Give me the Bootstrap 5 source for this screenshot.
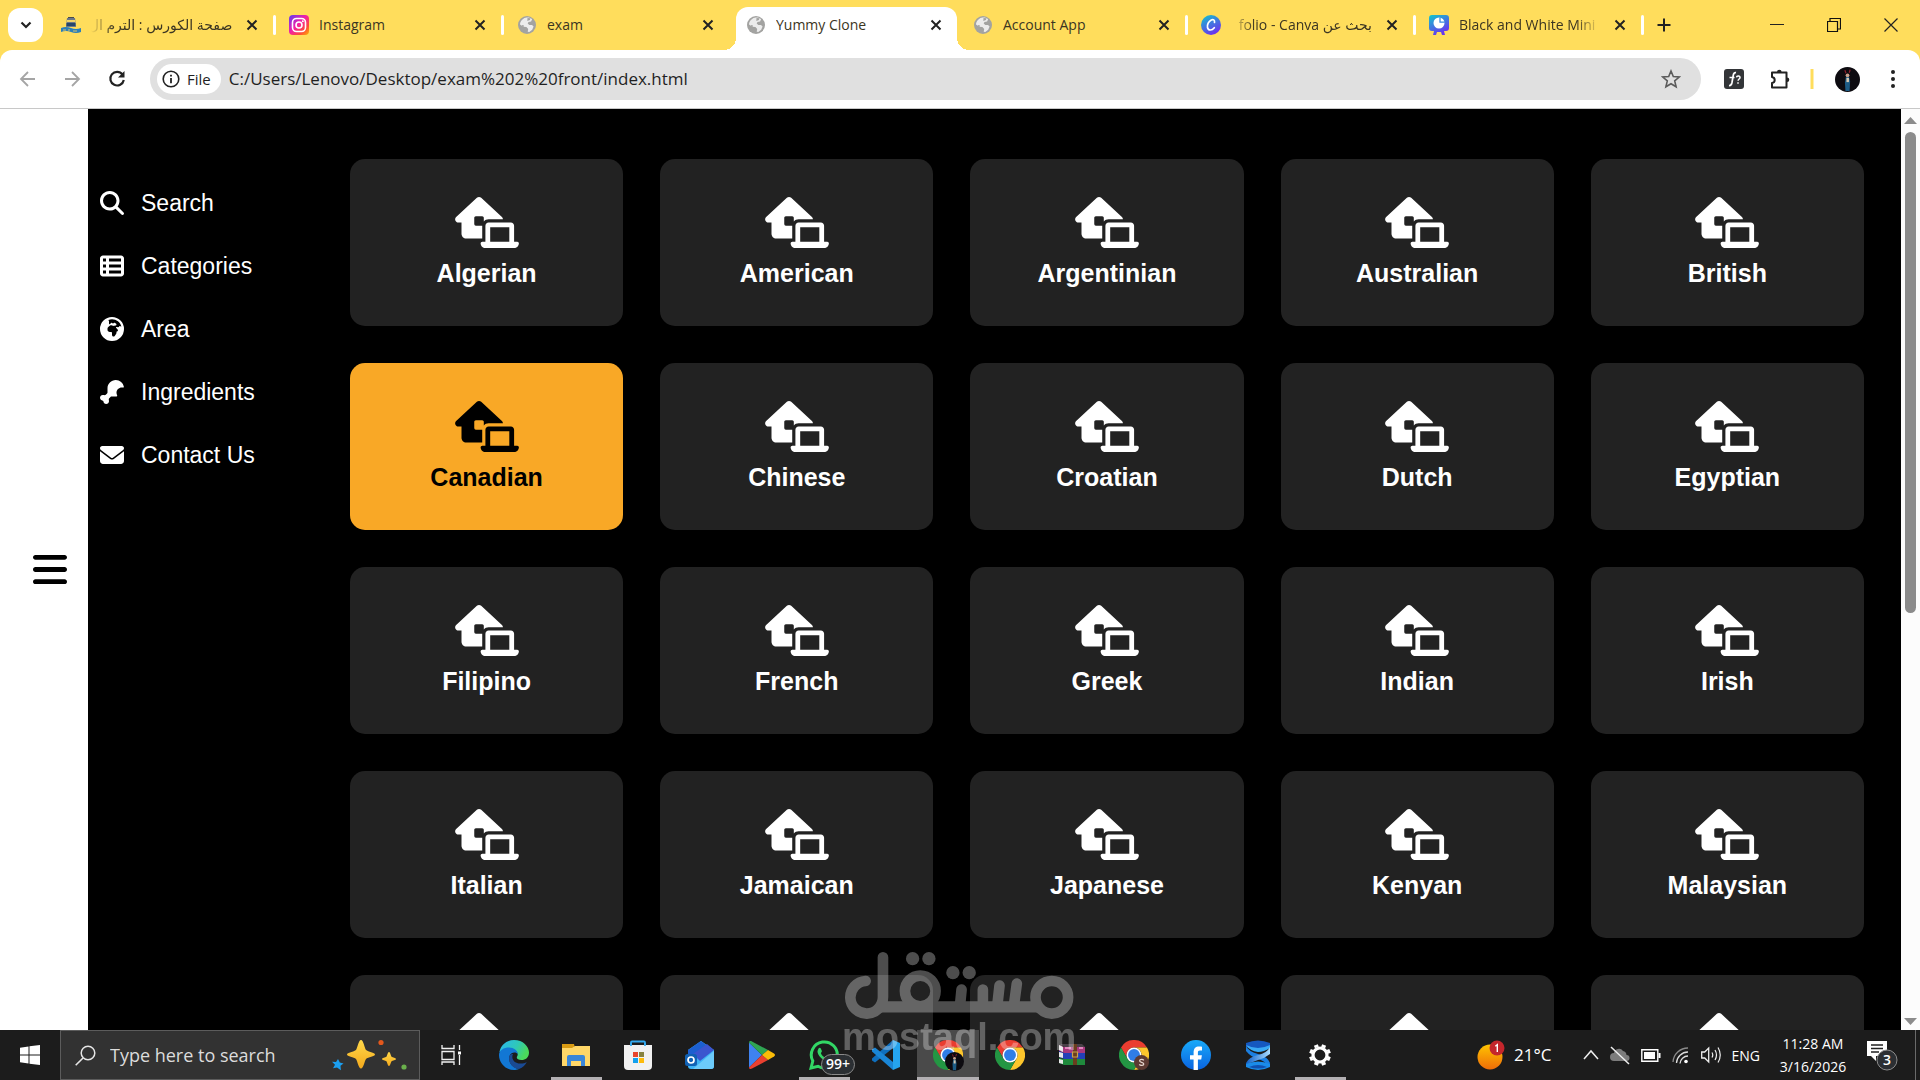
<!DOCTYPE html>
<html lang="en">
<head>
<meta charset="utf-8">
<meta name="viewport" content="width=device-width, initial-scale=1">
<title>Yummy Clone</title>
<link rel="stylesheet" href="https://cdn.jsdelivr.net/npm/bootstrap@5.3.0/dist/css/bootstrap.min.css">
<style>
  body { font-family: "Open Sans", "Noto Sans", "DejaVu Sans", sans-serif; font-size: 14px; color: #1f1f1f; }
  button { font-family: inherit; }
  svg { display: block; flex: none; }
  .bare { background: none; border: 0; padding: 0; color: inherit; }

  /* tab strip */
  .chrome-frame { background: #ffdd5c; }
  .tab-strip { height: 50px; padding-left: 8px; }
  .tab-finder { width: 35px; height: 34px; border-radius: 12px; background: #fff; margin: 8px 5px 8px 0; }
  .tab-item { flex: 0 1 228px; min-width: 0; padding: 0 0 7px 13px; height: 43px; align-self: flex-end; }
  .tab-item a { color: #3b3522; text-decoration: none; gap: 10px; min-width: 0; }
  .tab-title { white-space: nowrap; overflow: hidden; line-height: 20px; }
  .tab-close { width: 20px; margin: 0 11px 0 10px; }
  .tab-sep { width: 3px; height: 20px; border-radius: 2px; }
  .tab-item.divided .tab-sep { background: #fff; }
  .fade-end { -webkit-mask-image: linear-gradient(to left, transparent, #000 24px); mask-image: linear-gradient(to left, transparent, #000 24px); }
  .fade-start { -webkit-mask-image: linear-gradient(to right, transparent, #000 24px); mask-image: linear-gradient(to right, transparent, #000 24px); }
  .tab-item.current { flex-basis: 221px; margin: 0 3px 0 4px; background: #fff; border-radius: 12px 12px 0 0; padding-left: 10px; position: relative; }
  .tab-item.current .tab-close { margin-right: 8px; }
  .tab-item.current::before, .tab-item.current::after { content: ""; position: absolute; bottom: 0; width: 12px; height: 12px; }
  .tab-item.current::before { left: -12px; background: radial-gradient(circle at 0 0, transparent 12px, #fff 12px); }
  .tab-item.current::after { right: -12px; background: radial-gradient(circle at 100% 0, transparent 12px, #fff 12px); }
  .new-tab { padding: 0 13px; }
  .window-keys { gap: 43px; padding-right: 22px; }

  /* toolbar */
  .tool-row { background: #fff; border-radius: 12px 12px 0 0; padding: 8px 18px; border-bottom: 1px solid #c8c8c8; height: 59px; }
  .nav-keys { gap: 24px; padding-right: 22px; }
  .omnibox { background: #e0e0e0; border-radius: 21px; height: 42px; padding: 6px 20px 6px 7px; }
  .file-chip { background: #fff; border-radius: 15px; height: 30px; padding: 0 10px 0 5px; gap: 7px; font-size: 15px; }
  .omnibox input { background: none; border: 0; outline: 0; font-size: 17px; color: #1f1f1f; padding: 0 0 0 8px; min-width: 0; }
  .side-tools { padding-left: 23px; }

  /* page */
  .hamburger-rail { width: 88px; background: #fff; color: #000; padding-left: 33px; }
  .page-black { background: #000; font-family: "Liberation Sans", Arial, sans-serif; }
  .side-menu { width: 262px; padding: 76px 0 0 12px; gap: 27px; }
  .side-menu a { color: #fff; text-decoration: none; font-size: 23px; line-height: 36px; gap: 17px; }
  .area-grid { padding: 50px 37px 0 0; min-width: 0; }
  .area-row { --bs-gutter-x: 37px; --bs-gutter-y: 37px; }
  .area-tile { background: #222; color: #fff; border-radius: 15px; padding: 38px 12px 37px; min-height: 167px; cursor: pointer; }
  .area-tile svg { margin: 0 auto 10px; }
  .area-tile h3 { font-size: 25px; line-height: 30px; font-weight: 700; margin: 0; text-align: center; }
  .area-tile.picked { background: #f9a826; color: #000; }
  .scroll-rail { width: 19px; background: #fcfcfc; padding: 8px 0 5px; }
  .scroll-thumb { width: 11px; flex: 0 0 53%; margin: 8px 0 auto; border-radius: 6px; background: #8b8b8b; }

  /* taskbar */
  .task-bar { height: 50px; background: #1c1c1c; color: #fff; }
  .start-key { width: 60px; }
  .search-field { width: 360px; background: #323232; border: 1px solid #5c5c5c; padding: 0 8px 0 14px; }
  .search-field input { background: none; border: 0; outline: 0; color: #dcdcdc; font-size: 18px; padding: 0 0 0 14px; width: 0; }
  .search-field input::placeholder { color: #dcdcdc; opacity: 1; }
  .task-key { width: 62px; height: 50px; }
  .task-key.open { background: linear-gradient(#b3b0b3, #b3b0b3) center bottom / 51px 3px no-repeat; }
  .task-key.focused { background: linear-gradient(#b3b0b3, #b3b0b3) center bottom / 62px 3px no-repeat #4a4a4a; }
  .view-key { width: 63px; }
  .count-pill { left: 28px; top: 24px; height: 21px; line-height: 18px; padding: 0 4px; font-size: 14px; font-weight: 600; border: 1px solid #8a8a8a; border-radius: 11px; background: #2b2f33; }
  .tray { gap: 11px; }
  .weather { gap: 9px; font-size: 17px; margin-right: 20px; }
  .clock { width: 84px; line-height: 23px; text-align: center; }
  .notice { margin-right: 6px; }
  .peek { width: 5px; border-left: 1px solid #6a6a6a; }
  .water-sign { left: 50%; bottom: 17px; transform: translateX(-50%); opacity: .3; pointer-events: none; }
</style>
</head>
<body class="vh-100 d-flex flex-column overflow-hidden position-relative">

<svg width="0" height="0" class="position-absolute" aria-hidden="true">
  <defs>
    <linearGradient id="g-insta" x1="0" y1="0" x2="1" y2="1"><stop offset="0" stop-color="#5b3df5"/><stop offset=".45" stop-color="#f21fa8"/><stop offset=".75" stop-color="#ff4b3a"/><stop offset="1" stop-color="#ffb400"/></linearGradient>
    <linearGradient id="g-canva" x1="0" y1="0" x2=".5" y2="1"><stop offset="0" stop-color="#10c8cc"/><stop offset="1" stop-color="#6a35ee"/></linearGradient>
    <linearGradient id="g-edge" x1="0" y1="0" x2="1" y2=".4"><stop offset="0" stop-color="#29b6f0"/><stop offset=".6" stop-color="#2fc8b8"/><stop offset="1" stop-color="#4bd95a"/></linearGradient>
    <linearGradient id="g-gold" x1="0" y1="0" x2="0" y2="1"><stop offset="0" stop-color="#ffd84a"/><stop offset="1" stop-color="#f4a91c"/></linearGradient>
    <linearGradient id="g-sun" x1="0" y1="0" x2="0" y2="1"><stop offset="0" stop-color="#ffc400"/><stop offset="1" stop-color="#ee6c08"/></linearGradient>
    <linearGradient id="g-fb" x1="0" y1="0" x2="0" y2="1"><stop offset="0" stop-color="#19aaf9"/><stop offset="1" stop-color="#0a63e0"/></linearGradient>
    <linearGradient id="g-ribbon" x1="0" y1="0" x2="1" y2="0"><stop offset="0" stop-color="#1260c8"/><stop offset="1" stop-color="#a8dcff"/></linearGradient>
  </defs>
  <symbol id="i-house" viewBox="0 0 640 512"><path fill="currentColor" d="M218.3 8.5c12.3-11.3 31.2-11.3 43.4 0l208 192c6.7 6.2 10.3 14.8 10.3 23.5H336c-19.1 0-36.3 8.4-48 21.7V208c0-8.8-7.2-16-16-16H208c-8.8 0-16 7.2-16 16v64c0 8.800 7.200 16 16 16h64V416H112c-26.500 0-48-21.500-48-48V256H32c-13.200 0-25-8.100-29.800-20.300s-1.600-26.200 8.100-35.200l208-192zM352 304V448H544V304H352zm-48-16c0-17.700 14.300-32 32-32H560c17.700 0 32 14.300 32 32V448h32c8.800 0 16 7.200 16 16c0 26.500-21.500 48-48 48H544 352 304c-26.500 0-48-21.500-48-48c0-8.800 7.200-16 16-16h32V288z"/></symbol>
  <symbol id="i-close" viewBox="0 0 12 12"><path d="M1.500 1.500l9 9m0-9l-9 9" stroke="#222" stroke-width="2" fill="none"/></symbol>
  <symbol id="i-globe" viewBox="0 0 20 20"><circle cx="10" cy="10" r="9" fill="#a3a3a1"/><path d="M8.500 2.800c2.200-.8 5-.2 6.600 1.400l-1 2.300-2.600.4-.8 1.700 1.600 1.500 2.700-.2 1.600 1.500-1.400 3.400-2.900 2.300-1.600-.3.500-2.700-1.800-2-3-.3L3 9.500c.1-3 2.600-6 5.500-6.700z" fill="#ececec"/><path d="M10.500 3l3 .3-.6 1.700-2.600.9zM5 10l2 .5-.5 1.400-1.300-.4z" fill="#a3a3a1"/></symbol>
  <symbol id="i-chrome" viewBox="0 0 48 48"><path fill="#ea3d30" d="M3.200 12A24 24 0 0 1 44.800 12H24A12 12 0 0 0 13.600 30Z"/><path fill="#fdc62c" d="M44.800 12A24 24 0 0 1 24 48L34.400 30A12 12 0 0 0 24 12Z"/><path fill="#239643" d="M3.200 12A24 24 0 0 0 24 48L34.400 30A12 12 0 0 1 13.600 30Z"/><circle cx="24" cy="24" r="12" fill="#fff"/><circle cx="24" cy="24" r="9.500" fill="#2f7de8"/></symbol>
  <symbol id="i-face" viewBox="0 0 24 24"><circle cx="12" cy="12" r="12" fill="#0d0b10"/><path d="M10.500 9h3l1 5-.5 9h-4l-.5-8z" fill="#1d5c86"/><circle cx="12" cy="8" r="1.800" fill="#c9a08a"/><path d="M11 10.500h2.400v4H11z" fill="#d8c8b0"/><path d="M9.500 3l1 3m4-3.500l-.8 3" stroke="#8d1f2b" stroke-width="1.200"/></symbol>
</svg>

<header class="chrome-frame">
  <div class="tab-strip d-flex">
    <button class="tab-finder bare bg-white d-flex align-items-center justify-content-center" aria-label="Search tabs">
      <svg width="12" height="8" viewBox="0 0 12 8"><path d="M1.500 1.500L6 6l4.500-4.500" fill="none" stroke="#222" stroke-width="2.200"/></svg>
    </button>

    <div class="tab-item divided d-flex align-items-center">
      <a href="#" class="d-flex align-items-center flex-fill">
        <svg width="20" height="20" viewBox="0 0 20 20"><path d="M6 3h8l1 9H5z" fill="#6b7788"/><path d="M6 5h8v2H6z" fill="#f1d56a"/><path d="M5.500 8h9v3h-9z" fill="#26466b"/><path d="M7 2h6v1H7z" fill="#4a4a4a"/><path d="M0 13q5-2 10 0t10 0v4q-5 2-10 0t-10 0z" fill="#2d7fb8"/><path d="M2 15h3m2 0h2m3 1h4" stroke="#d7c46a" stroke-width="1"/></svg>
        <span class="tab-title flex-fill fade-start" dir="rtl">صفحة الكورس : الترم ال</span>
      </a>
      <button class="tab-close bare d-flex justify-content-center" aria-label="Close tab"><svg width="12" height="12"><use href="#i-close"/></svg></button>
      <span class="tab-sep"></span>
    </div>
    <div class="tab-item divided d-flex align-items-center">
      <a href="#" class="d-flex align-items-center flex-fill">
        <svg width="20" height="20" viewBox="0 0 20 20"><rect width="20" height="20" rx="4" fill="url(#g-insta)"/><rect x="3.500" y="3.500" width="13" height="13" rx="4" fill="none" stroke="#fff" stroke-width="1.600"/><circle cx="10" cy="10" r="3" fill="none" stroke="#fff" stroke-width="1.600"/><circle cx="13.800" cy="6.300" r="1" fill="#fff"/></svg>
        <span class="tab-title flex-fill">Instagram</span>
      </a>
      <button class="tab-close bare d-flex justify-content-center" aria-label="Close tab"><svg width="12" height="12"><use href="#i-close"/></svg></button>
      <span class="tab-sep"></span>
    </div>
    <div class="tab-item d-flex align-items-center">
      <a href="#" class="d-flex align-items-center flex-fill">
        <svg width="20" height="20"><use href="#i-globe"/></svg>
        <span class="tab-title flex-fill">exam</span>
      </a>
      <button class="tab-close bare d-flex justify-content-center" aria-label="Close tab"><svg width="12" height="12"><use href="#i-close"/></svg></button>
      <span class="tab-sep"></span>
    </div>
    <div class="tab-item current d-flex align-items-center">
      <a href="#" class="d-flex align-items-center flex-fill">
        <svg width="20" height="20"><use href="#i-globe"/></svg>
        <span class="tab-title flex-fill">Yummy Clone</span>
      </a>
      <button class="tab-close bare d-flex justify-content-center" aria-label="Close tab"><svg width="12" height="12"><use href="#i-close"/></svg></button>
      <span class="tab-sep"></span>
    </div>
    <div class="tab-item divided d-flex align-items-center">
      <a href="#" class="d-flex align-items-center flex-fill">
        <svg width="20" height="20"><use href="#i-globe"/></svg>
        <span class="tab-title flex-fill">Account App</span>
      </a>
      <button class="tab-close bare d-flex justify-content-center" aria-label="Close tab"><svg width="12" height="12"><use href="#i-close"/></svg></button>
      <span class="tab-sep"></span>
    </div>
    <div class="tab-item divided d-flex align-items-center">
      <a href="#" class="d-flex align-items-center flex-fill">
        <svg width="20" height="20" viewBox="0 0 20 20"><circle cx="10" cy="10" r="10" fill="url(#g-canva)"/><path d="M13.500 7.500c.5-2.500-1.400-3.500-3.200-2.600C7.500 6.300 6 9.800 6.500 12.500c.6 3.200 4.300 3.400 6.800.2" fill="none" stroke="#fff" stroke-width="1.700" stroke-linecap="round"/></svg>
        <span class="tab-title flex-fill fade-start" dir="rtl">بحث عن folio - Canva</span>
      </a>
      <button class="tab-close bare d-flex justify-content-center" aria-label="Close tab"><svg width="12" height="12"><use href="#i-close"/></svg></button>
      <span class="tab-sep"></span>
    </div>
    <div class="tab-item divided d-flex align-items-center">
      <a href="#" class="d-flex align-items-center flex-fill">
        <svg width="20" height="20" viewBox="0 0 20 20"><path d="M3 0h14a3 3 0 0 1 3 3v10a3 3 0 0 1-3 3h-2l1 4h-3l-1-3h-4l-1 3H4l1-4H3a3 3 0 0 1-3-3V3a3 3 0 0 1 3-3z" fill="url(#g-canva)"/><circle cx="10" cy="8" r="5.500" fill="#fff"/><path d="M11 2.500v4.700h4.800" fill="none" stroke="#3a8be0" stroke-width="1.300"/></svg>
        <span class="tab-title flex-fill fade-end">Black and White Mini</span>
      </a>
      <button class="tab-close bare d-flex justify-content-center" aria-label="Close tab"><svg width="12" height="12"><use href="#i-close"/></svg></button>
      <span class="tab-sep"></span>
    </div>
    <button class="new-tab bare" aria-label="New tab"><svg width="14" height="14" viewBox="0 0 14 14"><path d="M7 .5v13M.5 7h13" stroke="#222" stroke-width="2"/></svg></button>
    <div class="window-keys d-flex align-items-center ms-auto">
      <button class="bare" aria-label="Minimize"><svg width="14" height="14"><path d="M0 6.500h14" stroke="#222"/></svg></button>
      <button class="bare" aria-label="Restore"><svg width="14" height="14" viewBox="0 0 14 14"><path d="M.5 3.500h10v10H.5zM3 3V.5h10.500V11H11" fill="none" stroke="#111" stroke-width="1.200"/></svg></button>
      <button class="bare" aria-label="Close window"><svg width="14" height="14" viewBox="0 0 14 14"><path d="M.5.5l13 13m0-13l-13 13" stroke="#222" stroke-width="1.200"/></svg></button>
    </div>
  </div>

  <div class="tool-row d-flex align-items-center">
    <div class="nav-keys d-flex">
      <button class="bare" aria-label="Back"><svg width="20" height="20" viewBox="0 0 20 20"><path d="M17 10H3.500M10 3l-7 7 7 7" fill="none" stroke="#a5a5a5" stroke-width="1.800"/></svg></button>
      <button class="bare" aria-label="Forward"><svg width="20" height="20" viewBox="0 0 20 20"><path d="M3 10h13.500M10 3l7 7-7 7" fill="none" stroke="#a5a5a5" stroke-width="1.800"/></svg></button>
      <button class="bare" aria-label="Reload"><svg width="22" height="20" viewBox="0 0 22 20"><path d="M16.500 5.500A6.800 6.800 0 1 0 17.800 11" fill="none" stroke="#222" stroke-width="2.200"/><path d="M18.500 2v6.500H12z" fill="#222"/></svg></button>
    </div>
    <div class="omnibox d-flex align-items-center flex-fill">
      <button class="file-chip bare bg-white d-flex align-items-center"><svg width="18" height="18" viewBox="0 0 18 18"><circle cx="9" cy="9" r="7.800" fill="none" stroke="#222" stroke-width="1.600"/><path d="M9 8v5.200M9 4.800v1.800" stroke="#222" stroke-width="1.800"/></svg>File</button>
      <input class="flex-fill" type="text" aria-label="Address" value="C:/Users/Lenovo/Desktop/exam%202%20front/index.html">
      <button class="bare" aria-label="Bookmark this page"><svg width="20" height="20" viewBox="0 0 20 20"><path d="M10 2l2.300 5.500 6 .5-4.600 3.900 1.400 5.900L10 14.700l-5.100 3.100 1.400-5.900L1.700 8l6-.5z" fill="none" stroke="#5b5b5b" stroke-width="1.600"/></svg></button>
    </div>
    <div class="side-tools d-flex align-items-center">
      <button class="bare" aria-label="Font finder"><svg width="20" height="20" viewBox="0 0 20 20"><rect width="20" height="20" rx="3" fill="#333538"/><path d="M5 16.500c2 .3 2.600-1 3-3L9.300 6c.3-1.700 1-2.600 2.700-2.300M5.500 8.500h5" fill="none" stroke="#fff" stroke-width="1.700"/><path d="M12.500 8.300c.3-1.800 4-1.600 3.500.6-.3 1.200-1.800 1.200-1.900 2.900m-.1 1.400v1.600" fill="none" stroke="#fff" stroke-width="1.500"/></svg></button>
      <button class="bare ms-4" aria-label="Extensions"><svg width="24" height="24" viewBox="0 0 24 24"><path d="M4 5.500h14.500v15H4V16c3.600-.5 3.600-5.500 0-6z" fill="none" stroke="#222" stroke-width="2" stroke-linejoin="round"/><path d="M9 5a2.300 2.300 0 0 1 4.600 0zM19 10.500a2.300 2.300 0 0 1 0 4.600z" fill="#222"/></svg></button>
      <svg class="mx-3" width="7" height="20"><path d="M4 0v20" stroke="#ffdd5c" stroke-width="3"/></svg>
      <button class="bare ms-1" aria-label="Profile"><svg width="25" height="25"><use href="#i-face"/></svg></button>
      <button class="bare ms-4" aria-label="Menu"><svg width="18" height="20" viewBox="0 0 18 20"><g fill="#222"><circle cx="9" cy="3" r="2"/><circle cx="9" cy="10" r="2"/><circle cx="9" cy="17" r="2"/></g></svg></button>
    </div>
  </div>
</header>

<main class="d-flex flex-fill overflow-hidden">
  <div class="hamburger-rail d-flex align-items-center flex-shrink-0">
    <button class="bare" aria-label="Toggle menu"><svg width="34" height="39" viewBox="0 0 448 512"><path fill="#000" d="M0 96C0 78.300 14.300 64 32 64H416c17.700 0 32 14.300 32 32s-14.300 32-32 32H32C14.300 128 0 113.700 0 96zM0 256c0-17.700 14.300-32 32-32H416c17.700 0 32 14.300 32 32s-14.300 32-32 32H32c-17.700 0-32-14.300-32-32zM448 416c0 17.700-14.300 32-32 32H32c-17.700 0-32-14.300-32-32s14.300-32 32-32H416c17.700 0 32 14.300 32 32z"/></svg></button>
  </div>
  <div class="page-black d-flex flex-fill overflow-hidden">
    <nav class="side-menu d-flex flex-column flex-shrink-0">
      <a href="#" class="d-flex align-items-center"><svg width="24" height="24" viewBox="0 0 512 512"><path fill="#fff" d="M416 208c0 45.900-14.900 88.300-40 122.700L502.600 457.400c12.500 12.500 12.500 32.800 0 45.300s-32.800 12.500-45.300 0L330.700 376c-34.400 25.200-76.800 40-122.700 40C93.100 416 0 322.900 0 208S93.100 0 208 0S416 93.100 416 208zM208 352a144 144 0 1 0 0-288 144 144 0 1 0 0 288z"/></svg>Search</a>
      <a href="#" class="d-flex align-items-center"><svg width="24" height="24" viewBox="0 0 512 512"><path fill="#fff" d="M0 96C0 60.700 28.700 32 64 32H448c35.300 0 64 28.700 64 64V416c0 35.300-28.700 64-64 64H64c-35.300 0-64-28.700-64-64V96zm64 0v64h64V96H64zm384 0H192v64H448V96zM64 224v64h64V224H64zm384 0H192v64H448V224zM64 352v64h64V352H64zm384 0H192v64H448V352z"/></svg>Categories</a>
      <a href="#" class="d-flex align-items-center"><svg width="24" height="24" viewBox="0 0 512 512"><path fill="#fff" d="M177.800 63.200l10 17.400c2.800 4.800 4.200 10.300 4.200 15.900v41.400c0 3.900 1.600 7.700 4.300 10.400c6.200 6.200 16.500 5.700 22-1.200l13.600-17c4.700-5.900 12.900-7.700 19.600-4.300l15.200 7.600c3.400 1.700 7.200 2.600 11 2.600c6.500 0 12.800-2.600 17.400-7.200l3.900-3.900c2.900-2.900 7.300-3.600 11-1.800l29.200 14.600c7.800 3.900 12.600 11.800 12.600 20.500c0 10.500-7.100 19.600-17.300 22.200l-35.400 8.800c-7.400 1.800-15.100 1.500-22.400-.9l-32-10.700c-3.300-1.100-6.700-1.700-10.200-1.700c-7 0-13.800 2.300-19.400 6.500L176 212c-10.100 7.600-16 19.400-16 32v28c0 26.500 21.500 48 48 48h32c8.800 0 16 7.200 16 16v48c0 17.700 14.300 32 32 32c10.100 0 19.600-4.700 25.600-12.800l25.600-34.100c8.300-11.100 12.800-24.600 12.800-38.400V318.600c0-3.900 2.600-7.300 6.400-8.200l5.300-1.300c11.900-3 20.300-13.700 20.300-26c0-7.100-2.800-13.900-7.800-18.900l-33.500-33.500c-3.700-3.700-3.700-9.700 0-13.400c5.700-5.700 14.100-7.700 21.800-5.100l14.100 4.700c12.300 4.100 25.700-1.500 31.500-13c3.500-7 11.200-10.800 18.900-9.200l27.400 5.500C432 112.400 351.500 48 256 48c-27.700 0-54 5.400-78.200 15.200zM0 256a256 256 0 1 1 512 0A256 256 0 1 1 0 256z"/></svg>Area</a>
      <a href="#" class="d-flex align-items-center"><svg width="24" height="24" viewBox="0 0 512 512"><path fill="#fff" d="M160 265.200c0 8.500-3.400 16.600-9.400 22.600l-26.800 26.800c-12.300 12.300-32.500 11.400-49.400 7.200C69.800 320.600 65 320 60 320c-33.100 0-60 26.900-60 60s26.900 60 60 60c6.300 0 12 5.700 12 12c0 33.100 26.900 60 60 60s60-26.900 60-60c0-5-.6-9.800-1.800-14.500c-4.200-16.900-5.200-37.100 7.200-49.400l26.800-26.800c6-6 14.100-9.400 22.600-9.400H336c6.300 0 12.400-.3 18.500-1c11.900-1.200 16.400-15.500 10.800-26c-8.500-15.800-13.300-33.800-13.300-53c0-61.900 50.100-112 112-112c8 0 15.700 .8 23.200 2.400c11.700 2.500 24.100-5.900 22-17.600C494.500 62.500 422.500 0 336 0C238.800 0 160 78.800 160 176v89.200z"/></svg>Ingredients</a>
      <a href="#" class="d-flex align-items-center"><svg width="24" height="24" viewBox="0 0 512 512"><path fill="#fff" d="M48 64C21.500 64 0 85.500 0 112c0 15.100 7.100 29.300 19.200 38.400L236.800 313.600c11.400 8.500 27 8.500 38.400 0L492.800 150.400c12.100-9.100 19.200-23.300 19.200-38.400c0-26.500-21.500-48-48-48H48zM0 176V384c0 35.300 28.700 64 64 64H448c35.300 0 64-28.700 64-64V176L294.400 339.200c-22.800 17.100-54 17.100-76.800 0L0 176z"/></svg>Contact Us</a>
    </nav>
    <section class="area-grid flex-fill">
      <div class="area-row row row-cols-5">
        <div class="col"><div class="area-tile"><svg width="64" height="51"><use href="#i-house"/></svg><h3>Algerian</h3></div></div>
        <div class="col"><div class="area-tile"><svg width="64" height="51"><use href="#i-house"/></svg><h3>American</h3></div></div>
        <div class="col"><div class="area-tile"><svg width="64" height="51"><use href="#i-house"/></svg><h3>Argentinian</h3></div></div>
        <div class="col"><div class="area-tile"><svg width="64" height="51"><use href="#i-house"/></svg><h3>Australian</h3></div></div>
        <div class="col"><div class="area-tile"><svg width="64" height="51"><use href="#i-house"/></svg><h3>British</h3></div></div>
        <div class="col"><div class="area-tile picked"><svg width="64" height="51"><use href="#i-house"/></svg><h3>Canadian</h3></div></div>
        <div class="col"><div class="area-tile"><svg width="64" height="51"><use href="#i-house"/></svg><h3>Chinese</h3></div></div>
        <div class="col"><div class="area-tile"><svg width="64" height="51"><use href="#i-house"/></svg><h3>Croatian</h3></div></div>
        <div class="col"><div class="area-tile"><svg width="64" height="51"><use href="#i-house"/></svg><h3>Dutch</h3></div></div>
        <div class="col"><div class="area-tile"><svg width="64" height="51"><use href="#i-house"/></svg><h3>Egyptian</h3></div></div>
        <div class="col"><div class="area-tile"><svg width="64" height="51"><use href="#i-house"/></svg><h3>Filipino</h3></div></div>
        <div class="col"><div class="area-tile"><svg width="64" height="51"><use href="#i-house"/></svg><h3>French</h3></div></div>
        <div class="col"><div class="area-tile"><svg width="64" height="51"><use href="#i-house"/></svg><h3>Greek</h3></div></div>
        <div class="col"><div class="area-tile"><svg width="64" height="51"><use href="#i-house"/></svg><h3>Indian</h3></div></div>
        <div class="col"><div class="area-tile"><svg width="64" height="51"><use href="#i-house"/></svg><h3>Irish</h3></div></div>
        <div class="col"><div class="area-tile"><svg width="64" height="51"><use href="#i-house"/></svg><h3>Italian</h3></div></div>
        <div class="col"><div class="area-tile"><svg width="64" height="51"><use href="#i-house"/></svg><h3>Jamaican</h3></div></div>
        <div class="col"><div class="area-tile"><svg width="64" height="51"><use href="#i-house"/></svg><h3>Japanese</h3></div></div>
        <div class="col"><div class="area-tile"><svg width="64" height="51"><use href="#i-house"/></svg><h3>Kenyan</h3></div></div>
        <div class="col"><div class="area-tile"><svg width="64" height="51"><use href="#i-house"/></svg><h3>Malaysian</h3></div></div>
        <div class="col"><div class="area-tile"><svg width="64" height="51"><use href="#i-house"/></svg></div></div>
        <div class="col"><div class="area-tile"><svg width="64" height="51"><use href="#i-house"/></svg></div></div>
        <div class="col"><div class="area-tile"><svg width="64" height="51"><use href="#i-house"/></svg></div></div>
        <div class="col"><div class="area-tile"><svg width="64" height="51"><use href="#i-house"/></svg></div></div>
        <div class="col"><div class="area-tile"><svg width="64" height="51"><use href="#i-house"/></svg></div></div>
      </div>
    </section>
  </div>
  <div class="scroll-rail d-flex flex-column align-items-center flex-shrink-0">
    <svg width="13" height="7"><path d="M0 7L6.500 0 13 7z" fill="#8b8b8b"/></svg>
    <div class="scroll-thumb"></div>
    <svg width="13" height="7"><path d="M0 0h13L6.500 7z" fill="#8b8b8b"/></svg>
  </div>
</main>

<footer class="task-bar d-flex flex-shrink-0">
  <button class="start-key bare d-flex align-items-center justify-content-center" aria-label="Start"><svg width="20" height="20" viewBox="0 0 20 20"><path d="M0 2.800L8.500 1.500v8H0zM9.500 1.300L20 0v9.500H9.500zM0 10.500h8.500v8L0 17.200zM9.500 10.500H20V20L9.500 18.700z" fill="#fff"/></svg></button>
  <label class="search-field d-flex align-items-center">
    <svg width="21" height="21" viewBox="0 0 21 21"><circle cx="13" cy="8" r="6.800" fill="none" stroke="#e6e6e6" stroke-width="1.500"/><path d="M8 13l-7.300 7.300" stroke="#e6e6e6" stroke-width="1.600"/></svg>
    <input class="flex-fill" type="text" placeholder="Type here to search" aria-label="Type here to search">
    <svg width="80" height="34" viewBox="0 0 80 34"><path d="M30 2c2.500 0 3.500 8 5 10 2 1.700 9 2.500 9 4.500s-7 2.700-9 4.500c-1.500 2-2.500 9.500-5 9.500s-3.500-7.500-5-9.500c-2-1.800-9-2.500-9-4.500s7-2.800 9-4.500c1.500-2 2.500-10 5-10z" fill="url(#g-gold)"/><path d="M58 14c1.300 0 1.700 3.500 2.600 4.700 1 .9 4.400 1.200 4.400 2.300s-3.400 1.500-4.400 2.300c-.9 1.200-1.300 4.700-2.600 4.700s-1.700-3.500-2.600-4.700c-1-.8-4.400-1.200-4.400-2.300s3.400-1.400 4.400-2.300c.9-1.200 1.300-4.700 2.600-4.700z" fill="url(#g-gold)"/><path d="M7 21l1.800 3.600 3.700.8-3 2.400.4 4.400L6 29.600l-4 .7 2-3.500-3-3 4 .3z" fill="#1c9ff0"/><circle cx="50" cy="4.500" r="2.600" fill="#e4581c"/><circle cx="73" cy="29" r="2.600" fill="#6ab04c"/></svg>
  </label>
  <button class="task-key view-key bare d-flex align-items-center justify-content-center" aria-label="Task view"><svg width="22" height="20" viewBox="0 0 22 20"><path d="M1 0v3.500h12V0M1 6.500h12v8H1zM1 20v-3h12v3M18.500 0v5m0 5v10" fill="none" stroke="#f2f2f2" stroke-width="1.300"/><path d="M17 6.500h3v3h-3z" fill="#fff"/></svg></button>
  <button class="task-key bare d-flex align-items-center justify-content-center" aria-label="Edge"><svg width="30" height="30" viewBox="0 0 30 30"><path d="M.5 12C2 4.500 8 0 15 0c9 0 15 6.500 15 12.500 0 5-3.500 7.500-7.500 7.500-3 0-4.700-1.200-4.700-2.500 0-1 .9-1.300.9-3 0-3-3-5.300-7-5.300-5 0-9.500 3-11.200 2.800z" fill="url(#g-edge)"/><path d="M0 15C0 10 5 7.500 10 7.500c5 0 8.700 3 8.700 6.500-1-2-6.500-2.500-8 1.500-2 5 1.500 12 9.300 13.500-2 .8-3.500 1-5 1C6.500 30 0 23 0 15z" fill="#1277d4"/><path d="M10.500 16c-2 6 3 12.500 9.500 13 4-1.500 6.500-4.500 7.800-7-4 2.500-10.800 2.200-13.300-1.500-1.500-2.200-1.500-4-.5-6.500-1.500 0-2.800.5-3.500 2z" fill="#1a4a93"/></svg></button>
  <button class="task-key open bare d-flex align-items-center justify-content-center" aria-label="File Explorer"><svg width="28" height="24" viewBox="0 0 28 24"><path d="M0 1h12l1 4H0z" fill="#d99b13"/><path d="M0 5h10l3-2h15v20H0z" fill="#ffd768"/><path d="M5 23v-9a2 2 0 0 1 2-2h14a2 2 0 0 1 2 2v9h-4v-5H9v5z" fill="#3a86d8"/></svg></button>
  <button class="task-key bare d-flex align-items-center justify-content-center" aria-label="Store"><svg width="30" height="30" viewBox="0 0 30 30"><path d="M8 8V2.500A1 1 0 0 1 9 1.500h12a1 1 0 0 1 1 1V8" fill="none" stroke="#33aaf0" stroke-width="1.800"/><path d="M1 5h28v21a4 4 0 0 1-4 4H5a4 4 0 0 1-4-4z" fill="#f1f1f1"/><path d="M8 6V3m14 3V3" stroke="#33aaf0" stroke-width="1.800"/><path d="M10 12h5v5h-5z" fill="#e8452c"/><path d="M16 12h5v5h-5z" fill="#868240"/><path d="M10 18h5v5h-5z" fill="#12a0ee"/><path d="M16 18h5v5h-5z" fill="#fdbb0b"/></svg></button>
  <button class="task-key bare d-flex align-items-center justify-content-center" aria-label="Outlook"><svg width="30" height="30" viewBox="0 0 30 30"><path d="M3 10L16 1l13 9v16a3 3 0 0 1-3 3H6a3 3 0 0 1-3-3z" fill="#3fb4f5"/><path d="M3 10L16 1l8 6-14 11-7-2z" fill="#1c5fd0"/><path d="M8 14L22 4l7 6-14 11z" fill="#3b55cf"/><path d="M29 11v15a3 3 0 0 1-3 3H8z" fill="#6ccbfb"/><rect y="14" width="12" height="12" rx="2.500" fill="#1061b4"/><circle cx="6" cy="20" r="3" fill="none" stroke="#fff" stroke-width="1.700"/></svg></button>
  <button class="task-key bare d-flex align-items-center justify-content-center" aria-label="Google Play"><svg width="28" height="30" viewBox="0 0 28 30"><path d="M1 2.500v25L14 15z" fill="#3f82f0"/><path d="M1 2.500C1 1 2.500.6 4 1.500L20 10l-6 5z" fill="#2fa553"/><path d="M1 27.500c0 1.500 1.500 1.900 3 1L20 20l-6-5z" fill="#ea4030"/><path d="M20 10l6 3.500q2 1.500 0 3L20 20l-6-5z" fill="#fbbc08"/></svg></button>
  <button class="task-key open bare d-flex align-items-center justify-content-center position-relative" aria-label="WhatsApp"><svg width="30" height="30" viewBox="0 0 30 30"><path d="M2 28l1.800-7A13 13 0 1 1 9 26.300z" fill="none" stroke="#32d665" stroke-width="3"/><path d="M9.500 8.500c1-1 2-.8 2.400.2l1 2.300c.2.800-1 1.600-1 2.200.8 2 2.500 3.600 4.700 4.500.8 0 1.300-1.600 2-1.400l2.600 1.300c1 .5 0 2.600-1.200 3.200-4.500 1.700-12-5.300-11.500-9.800z" fill="#32d665"/></svg><span class="count-pill position-absolute">99+</span></button>
  <button class="task-key bare d-flex align-items-center justify-content-center" aria-label="Visual Studio Code"><svg width="30" height="30" viewBox="0 0 30 30"><path d="M22 0l7 3v24l-7 3z" fill="#25a4ee"/><path d="M22 0v8L4 22.500 1 20.500v-2z" fill="#0f6fbd"/><path d="M22 30v-8L4 7.500 1 9.500v2z" fill="#1a86d6"/></svg></button>
  <button class="task-key focused bare d-flex align-items-center justify-content-center" aria-label="Chrome, Yummy Clone"><svg width="34" height="32" viewBox="0 0 34 32"><use href="#i-chrome" x="2" y="1" width="30" height="30"/><use href="#i-face" x="14" y="13" width="19" height="19"/></svg></button>
  <button class="task-key bare d-flex align-items-center justify-content-center" aria-label="Chrome"><svg width="30" height="30"><use href="#i-chrome"/></svg></button>
  <button class="task-key bare d-flex align-items-center justify-content-center" aria-label="WinRAR"><svg width="28" height="26" viewBox="0 0 28 26"><path d="M1 3l5 2h21v6H6L1 9z" fill="#a8387e"/><path d="M1 9l5 2h21v6H6l-5-2z" fill="#2340b8"/><path d="M1 16l5 1h21v6H6l-5-2z" fill="#1f8a3c"/><path d="M1 3l4 2v5L1 8zM1 10l4 1v5l-4-1zM1 17l4 1v4l-4-1z" fill="#e8e8e8"/><path d="M2 2l4 3h21l-3-3z" fill="#4a4048"/><path d="M15 2h4v21h-4z" fill="#6b3d1e"/><path d="M14.500 10h5v5h-5z" fill="none" stroke="#c9a24a" stroke-width="1.200"/><path d="M7 6h6m8 0h4" stroke="#f4a0d4" stroke-width="1.500"/></svg></button>
  <button class="task-key bare d-flex align-items-center justify-content-center" aria-label="Chrome, profile S"><svg width="30" height="30" viewBox="0 0 30 30"><use href="#i-chrome" width="30" height="30"/><circle cx="22.500" cy="22.500" r="7.500" fill="#5d3a32"/><path d="M24.800 20.300c-.8-1.200-4-1.200-4.200.4-.1 2 4.200 1.200 4.200 3.300 0 1.700-3.500 1.900-4.500.4" fill="none" stroke="#e8d8d0" stroke-width="1.200"/></svg></button>
  <button class="task-key bare d-flex align-items-center justify-content-center" aria-label="Facebook"><svg width="30" height="30" viewBox="0 0 30 30"><circle cx="15" cy="15" r="15" fill="url(#g-fb)"/><path d="M12.600 30V19.500H9v-4.300h3.600v-2.600c0-4.300 2-6.200 5.500-6.200 1.300 0 2.300.1 2.900.3v3.700h-2c-1.700 0-2.100.9-2.100 2.300v2.500h4l-.7 4.300h-3.300V30z" fill="#fff"/></svg></button>
  <button class="task-key bare d-flex align-items-center justify-content-center" aria-label="Ribbon app"><svg width="26" height="30" viewBox="0 0 26 30"><path d="M1 3Q13-2 25 3v4Q13 12 1 7z" fill="#1558c0"/><path d="M1 5q12 6 24 0v3q-6 4-12 4Q5 11 1 5z" fill="#3aaaf5"/><path d="M1 6q2 5 12 8t12 9q0 2-2 3-3-5-10-7T1 11z" fill="#1c7fe0"/><path d="M25 7q-3 6-12 8T1 23v3q5-4 12-6t12-6z" fill="url(#g-ribbon)"/><path d="M1 24q12-5 24 0v3q-12 6-24 0z" fill="#1a8cea"/><path d="M4 27q9-4 18 0-9 3-18 0z" fill="#1050b0"/></svg></button>
  <button class="task-key open bare d-flex align-items-center justify-content-center" aria-label="Settings"><svg width="24" height="24" viewBox="0 0 24 24"><circle cx="12" cy="12" r="7" fill="none" stroke="#fff" stroke-width="3.200"/><path d="M12 4V1.200M12 20v2.800M4 12H1.200M20 12h2.800M6.300 6.300l-2-2M17.700 17.700l2 2M6.300 17.700l-2 2M17.700 6.300l2-2" transform="rotate(22.500 12 12)" stroke="#fff" stroke-width="4.200"/></svg></button>

  <div class="tray d-flex align-items-center ms-auto">
    <button class="weather bare d-flex align-items-center"><svg width="28" height="30" viewBox="0 0 28 30"><circle cx="13" cy="17" r="12.500" fill="url(#g-sun)"/><circle cx="20" cy="8" r="7.500" fill="#c4262c"/><path d="M18.300 6.200l2-1.500V12" fill="none" stroke="#fff" stroke-width="1.400"/></svg>21°C</button>
    <svg width="16" height="16" viewBox="0 0 16 16"><path d="M1 12l7-8 7 8" fill="none" stroke="#eee" stroke-width="1.500"/></svg>
    <svg width="20" height="20" viewBox="0 0 20 20"><path d="M4 16a4 4 0 0 1 0-8 5 5 0 0 1 9-2 4.500 4.500 0 0 1 3.500 4 3 3 0 0 1 0 6z" fill="#7c7c7c"/><path d="M1 2l18 17" stroke="#eee" stroke-width="1.500"/></svg>
    <svg width="20" height="13" viewBox="0 0 20 13"><path d="M.8.800h16v11.400H.800z" fill="none" stroke="#fff" stroke-width="1.400"/><path d="M3 3h11v7H3z" fill="#fff"/><path d="M18.500 4v5" stroke="#fff" stroke-width="2"/></svg>
    <svg width="18" height="18" viewBox="0 0 18 18"><g fill="none" stroke="#8a8a8a" stroke-width="1.300"><path d="M1 16A15 15 0 0 1 16 2"/><path d="M4.500 17A11.500 11.500 0 0 1 16 6" stroke="#ddd"/><path d="M8 17.500A8 8 0 0 1 16 10" stroke="#ddd"/></g><circle cx="14" cy="15.500" r="1.800" fill="#fff"/></svg>
    <svg width="20" height="18" viewBox="0 0 20 18"><path d="M.7 6h3l4-4v14l-4-4h-3z" fill="none" stroke="#eee" stroke-width="1.300"/><path d="M11 6.500q1.500 2.500 0 5M14 4q3 5 0 10M17 1.500q4.500 7.500 0 15" fill="none" stroke="#eee" stroke-width="1.200"/></svg>
    <button class="bare">ENG</button>
    <button class="clock bare">11:28 AM<br>3/16/2026</button>
    <button class="notice bare" aria-label="Notifications"><svg width="32" height="32" viewBox="0 0 32 32"><path d="M1 2h20v15H10v5l-5-5H1z" fill="#fff"/><path d="M5 6h12M5 9.500h12M5 13h8" stroke="#222" stroke-width="1.300"/><circle cx="21" cy="21" r="10" fill="#2c2f33" stroke="#8c8c8c"/><text x="21" y="26" text-anchor="middle" font-size="14" font-weight="600" fill="#fff">3</text></svg></button>
    <span class="peek align-self-stretch"></span>
  </div>
</footer>

<svg class="water-sign position-absolute" width="232" height="112" viewBox="0 0 232 112">
  <g transform="scale(.333) translate(-135 -64)" fill="none" stroke="#fff" stroke-width="32" stroke-linecap="round">
    <circle cx="759" cy="203" r="49"/>
    <path d="M715 232H240" stroke-linecap="butt" stroke-width="34"/>
    <path d="M654 162l-8 60M602 168l-6 54M552 180v42M488 180l-4 42"/>
    <circle cx="364" cy="184" r="46"/>
    <path d="M200 154A49 49 0 1 0 252 203V83"/>
    <g fill="#fff" stroke="none"><circle cx="462" cy="129" r="20"/><circle cx="511" cy="129" r="20"/><circle cx="341" cy="87" r="20"/><circle cx="390" cy="87" r="20"/></g>
  </g>
  <text x="-2" y="99" font-family="Liberation Sans, Arial, sans-serif" font-weight="700" font-size="38" fill="#fff">mostaql.com</text>
</svg>

<script src="https://cdn.jsdelivr.net/npm/bootstrap@5.3.0/dist/js/bootstrap.bundle.min.js"></script>
</body>
</html>
